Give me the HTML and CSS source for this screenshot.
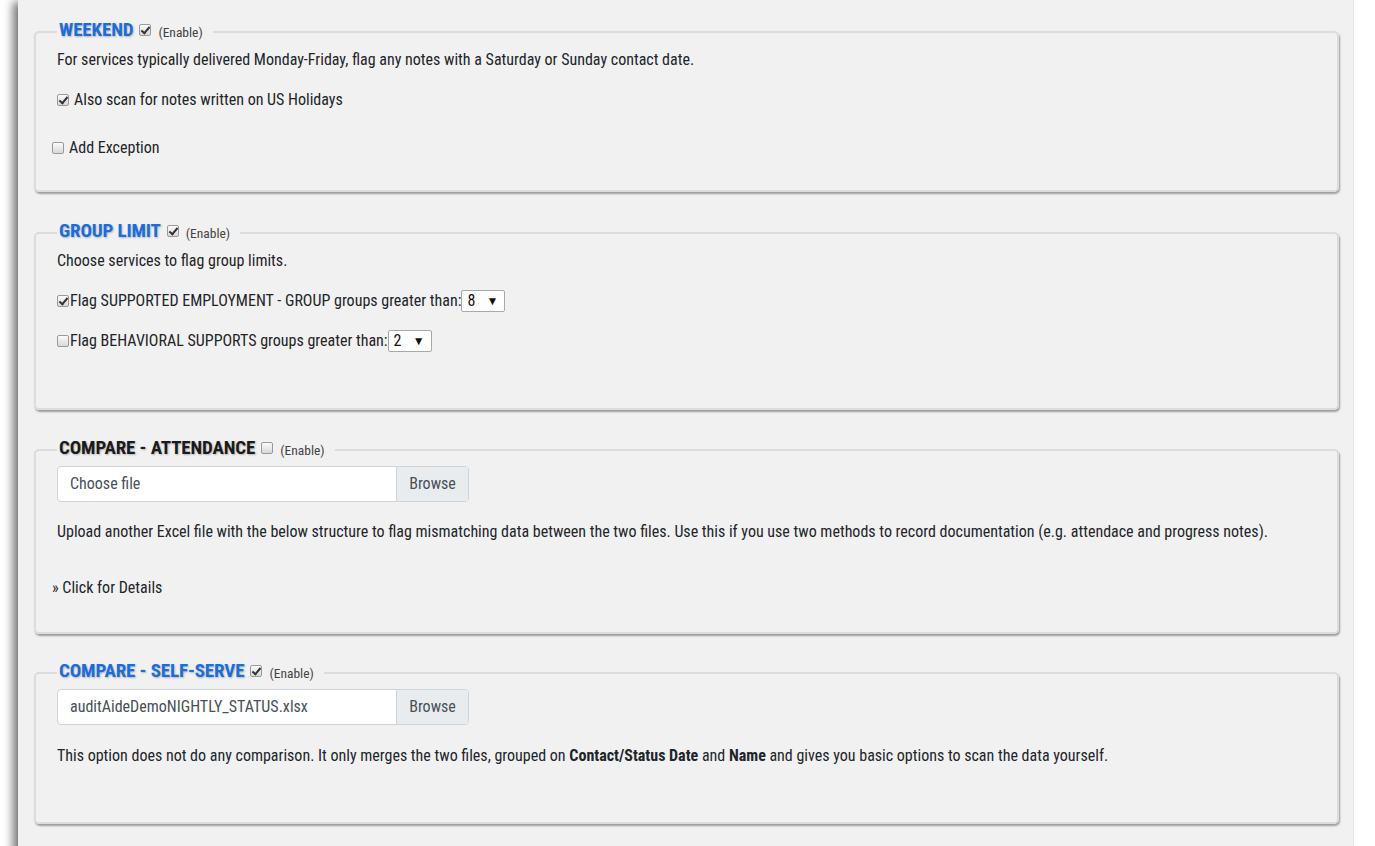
FILE: index.html
```html
<!DOCTYPE html>
<html>
<head>
<meta charset="utf-8">
<link rel="stylesheet" href="styles.css">
</head>
<body>
<div class="page">
  <fieldset class="panel p-weekend">
    <legend><span class="title blue">WEEKEND</span><span class="cb on"></span><span class="enable">(Enable)</span></legend>
    <p class="line first">For services typically delivered Monday-Friday, flag any notes with a Saturday or Sunday contact date.</p>
    <p class="line holiday"><span class="cb on"></span> Also scan for notes written on US Holidays</p>
    <p class="line exception"><span class="cb"></span> Add Exception</p>
  </fieldset>

  <fieldset class="panel p-group">
    <legend><span class="title blue">GROUP LIMIT</span><span class="cb on"></span><span class="enable">(Enable)</span></legend>
    <p class="line first">Choose services to flag group limits.</p>
    <p class="line flag"><span class="cb on"></span>Flag SUPPORTED EMPLOYMENT - GROUP groups greater than:<span class="select">8<span class="arrow">▼</span></span></p>
    <p class="line flag"><span class="cb"></span>Flag BEHAVIORAL SUPPORTS groups greater than:<span class="select">2<span class="arrow">▼</span></span></p>
  </fieldset>

  <fieldset class="panel p-attend">
    <legend><span class="title dark">COMPARE - ATTENDANCE</span><span class="cb"></span><span class="enable">(Enable)</span></legend>
    <div class="file"><span class="file-name">Choose file</span><span class="browse">Browse</span></div>
    <p class="line desc">Upload another Excel file with the below structure to flag mismatching data between the two files. Use this if you use two methods to record documentation (e.g. attendace and progress notes).</p>
    <p class="line details">» Click for Details</p>
  </fieldset>

  <fieldset class="panel p-self">
    <legend><span class="title blue">COMPARE - SELF-SERVE</span><span class="cb on"></span><span class="enable">(Enable)</span></legend>
    <div class="file"><span class="file-name">auditAideDemoNIGHTLY_STATUS.xlsx</span><span class="browse">Browse</span></div>
    <p class="line desc">This option does not do any comparison. It only merges the two files, grouped on <b>Contact/Status Date</b> and <b>Name</b> and gives you basic options to scan the data yourself.</p>
  </fieldset>
</div>
</body>
</html>
```

FILE: styles.css
```css
html, body {
  margin: 0;
  padding: 0;
  background: #ffffff;
}
body {
  font-family: "Roboto Condensed", Roboto, "Liberation Sans", sans-serif;
  font-stretch: 75%;
  font-size: 16px;
  line-height: 24px;
  color: #212529;
  overflow: hidden;
}
.page {
  margin-left: 18px;
  width: 1336px;
  min-height: 846px;
  background: #f1f1f1;
  border-right: 1px solid #e6e6e6;
  box-shadow: -7px 0 9px -2px rgba(0, 0, 0, 0.55);
  padding: 18px 0 40px;
  box-sizing: border-box;
}
.panel {
  margin: 0 14px 26px 16px;
  border: 2px solid #dcdcdc;
  border-radius: 5px;
  padding: 2px 21px 0;
  box-shadow: 1px 2px 2px rgba(0, 0, 0, 0.35);
  min-width: 0;
}
.panel legend {
  padding: 0 10px 4px 2px;
  line-height: 24px;
  height: 24px;
  display: flex;
  align-items: center;
}
.title {
  font-size: 19px;
  font-weight: 700;
  letter-spacing: -0.1px;
  text-shadow: 1px 1px 2px rgba(0, 0, 0, 0.25);
}
.blue { color: #1a6ddb; }
.dark { color: #1b1b1b; }
.enable {
  font-size: 13.5px;
  color: #444;
  margin-left: 7px;
  margin-top: 4px;
}
.cb {
  display: inline-block;
  width: 12px;
  height: 12px;
  border: 1px solid #9a9a9a;
  border-radius: 2px;
  background: linear-gradient(#fbfbfb, #d8d8d8);
  box-sizing: border-box;
  position: relative;
  vertical-align: middle;
  flex: none;
}
legend .cb { margin-left: 6px; margin-top: -1px; }
.cb.on::after {
  content: "";
  position: absolute;
  left: 3px;
  top: 0px;
  width: 3px;
  height: 7px;
  border: solid #333;
  border-width: 0 2px 2px 0;
  transform: rotate(40deg);
}
.line { margin: 0; }
.p-weekend .holiday { margin-top: 16px; display: flex; align-items: center; }
.p-weekend .holiday .cb { margin-right: 5px; }
.p-weekend .exception { margin: 24px 0 0 -5px; display: flex; align-items: center; }
.p-weekend .exception .cb { margin-right: 5px; }
.p-weekend { padding-bottom: 30px; margin-bottom: 27px; }

.p-group .flag {
  margin-top: 16px;
  display: flex;
  align-items: center;
}
.p-group .flag .cb { margin-right: 1px; }
.p-group { padding-bottom: 55px; }
.select {
  display: inline-flex;
  align-items: center;
  justify-content: space-between;
  width: 44px;
  height: 22px;
  box-sizing: border-box;
  border: 1px solid #a9a9a9;
  border-radius: 2px;
  background: #fff;
  padding: 0 6px 0 5px;
  color: #111;
}
.select .arrow { font-size: 12px; }

.file {
  display: flex;
  width: 412px;
  height: 36px;
  box-sizing: border-box;
  border: 1px solid #ced4da;
  border-radius: 4px;
  background: #fff;
  overflow: hidden;
}
.file-name {
  flex: 1;
  padding: 0 12px;
  line-height: 34px;
  color: #495057;
}
.browse {
  width: 71px;
  border-left: 1px solid #ced4da;
  background: #e9ecef;
  line-height: 34px;
  text-align: center;
  color: #495057;
}
.p-attend .desc { margin-top: 18px; }
.p-attend .details { margin: 32px 0 0 -5px; }
.p-attend { padding-bottom: 32px; margin-bottom: 25px; }
.p-self .desc { margin-top: 19px; }
.p-self { padding-bottom: 54px; }
b { font-weight: 700; }
```
